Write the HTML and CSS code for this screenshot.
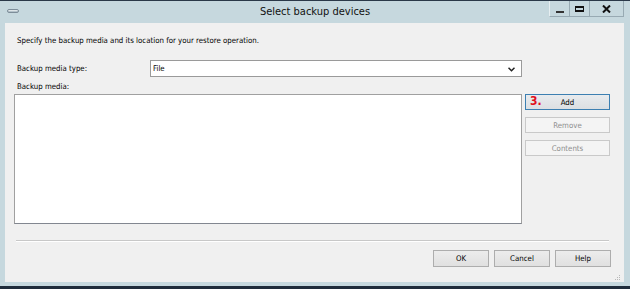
FILE: index.html
```html
<!DOCTYPE html>
<html>
<head>
  <title>Select backup devices</title>
  <meta charset="UTF-8" />
  <link rel="stylesheet" href="styles.css">
</head>
<body>
  <div class="window">
    <div class="titlebar">
      <div class="app-icon"></div>
      <div class="title">Select backup devices</div>
      <div class="caption-buttons">
        <div class="cap min"><span class="min-glyph"></span></div>
        <div class="cap max"><span class="max-glyph"></span></div>
        <div class="cap close">
          <svg width="9" height="8" viewBox="0 0 9 8">
            <path d="M1 0.5 L8 7.5 M8 0.5 L1 7.5" stroke="#111" stroke-width="2" fill="none"/>
          </svg>
        </div>
      </div>
    </div>

    <div class="client">
      <div class="intro">Specify the backup media and its location for your restore operation.</div>

      <div class="type-row">
        <div class="label">Backup media type:</div>
        <div class="combo">
          <span>File</span>
          <svg class="chevron" width="7" height="5" viewBox="0 0 7 5">
            <path d="M0.5 0.8 L3.5 3.8 L6.5 0.8" stroke="#222" stroke-width="1.5" fill="none"/>
          </svg>
        </div>
      </div>

      <div class="label media-label">Backup media:</div>

      <div class="media-row">
        <div class="listbox"></div>
        <div class="side-buttons">
          <div class="btn default"><span class="step">3.</span>Add</div>
          <div class="btn disabled">Remove</div>
          <div class="btn disabled">Contents</div>
        </div>
      </div>

      <div class="separator"></div>

      <div class="footer">
        <div class="btn">OK</div>
        <div class="btn">Cancel</div>
        <div class="btn">Help</div>
      </div>

      <svg class="grip" width="6" height="6" viewBox="0 0 6 6">
        <rect x="4" y="0" width="1" height="1" fill="#b8b8b8"/>
        <rect x="2" y="2" width="1" height="1" fill="#b8b8b8"/>
        <rect x="4" y="2" width="1" height="1" fill="#b8b8b8"/>
        <rect x="0" y="4" width="1" height="1" fill="#b8b8b8"/>
        <rect x="2" y="4" width="1" height="1" fill="#b8b8b8"/>
        <rect x="4" y="4" width="1" height="1" fill="#b8b8b8"/>
      </svg>
    </div>
  </div>
</body>
</html>
```

FILE: styles.css
```css
html, body {
  margin: 0;
  padding: 0;
}
body {
  font-family: "DejaVu Sans", sans-serif;
  font-stretch: condensed;
  font-size: 7.8px;
  color: #000;
  background: #c6d8de;
}
.window {
  width: 630px;
  height: 289px;
  box-sizing: border-box;
  border-top: 1px solid #2a3848;
  border-bottom: 3px solid #1f2c3b;
  background: #c6d8de;
  display: flex;
  flex-direction: column;
}
.titlebar {
  height: 22px;
  display: grid;
  grid-template-columns: 1fr auto 1fr;
  align-items: start;
}
.app-icon {
  width: 12px;
  height: 4px;
  margin: 8px 0 0 7px;
  border-radius: 2px;
  background: linear-gradient(#f4f7f8, #9fb0bb);
  border: 1px solid #7d8d99;
  box-sizing: border-box;
}
.title {
  font-size: 11px;
  line-height: 20px;
  color: #111;
  padding-top: 1px;
}
.caption-buttons {
  justify-self: end;
  display: flex;
  margin-right: 6px;
}
.cap {
  height: 16px;
  box-sizing: border-box;
  border: 1px solid #98aab3;
  border-top: none;
  border-left-color: #e6eef1;
  display: flex;
  align-items: center;
  justify-content: center;
}
.cap.min { width: 21px; }
.cap.max { width: 20px; border-left: none; }
.cap.close { width: 34px; border-left: none; }
.min-glyph {
  width: 8px;
  height: 2px;
  background: #333;
  margin-top: 6px;
}
.max-glyph {
  width: 9px;
  height: 6px;
  box-sizing: border-box;
  border: 1px solid #111;
  border-top-width: 2px;
  border-bottom-width: 2px;
  margin-top: 1px;
}
.client {
  position: relative;
  flex: 1;
  margin: 0 6px 4px 5px;
  background: #f0f0f0;
  padding: 11px 13px 0 9px;
  box-sizing: border-box;
}
.intro {
  line-height: 13px;
  padding-left: 3px;
}
.type-row {
  display: flex;
  align-items: center;
  margin-top: 13px;
  width: 508px;
}
.label {
  padding-left: 3px;
  line-height: 13px;
}
.type-row .label {
  width: 133px;
}
.combo {
  flex: 1;
  height: 17px;
  box-sizing: border-box;
  background: #fff;
  border: 1px solid #9a9a9a;
  display: flex;
  align-items: center;
  justify-content: space-between;
  padding: 0 6px 0 2px;
}
.chevron {
  margin-top: 1px;
}
.media-label {
  margin-top: 3px;
}
.media-row {
  display: flex;
  margin-top: 1px;
}
.listbox {
  width: 508px;
  height: 130px;
  box-sizing: border-box;
  background: #fff;
  border: 1px solid #a0a0a0;
  border-bottom-color: #828790;
}
.side-buttons {
  display: flex;
  flex-direction: column;
  gap: 7px;
  margin-left: 3px;
}
.btn {
  width: 85px;
  height: 16px;
  box-sizing: border-box;
  border: 1px solid #adadad;
  background: linear-gradient(#ececec, #e0e0e0);
  display: flex;
  align-items: center;
  justify-content: center;
  line-height: 13px;
  position: relative;
}
.btn.default {
  border-color: #3c7fb1;
  background: linear-gradient(#e8ebee, #dcdfe2);
}
.btn.disabled {
  border-color: #c9c9c9;
  background: #f4f4f4;
  color: #8d8d8d;
}
.step {
  position: absolute;
  left: 4px;
  top: 0;
  color: #e0101c;
  font-weight: bold;
  font-size: 12px;
}
.separator {
  margin: 16px 0 0 2px;
  width: 593px;
  border-top: 1px solid #c8c8c8;
  border-bottom: 1px solid #fff;
  height: 0;
}
.footer {
  display: flex;
  justify-content: flex-end;
  gap: 5px;
  margin-top: 8px;
}
.footer .btn {
  width: 56px;
  height: 17px;
}
.grip {
  position: absolute;
  right: 3px;
  bottom: 1px;
}
```
